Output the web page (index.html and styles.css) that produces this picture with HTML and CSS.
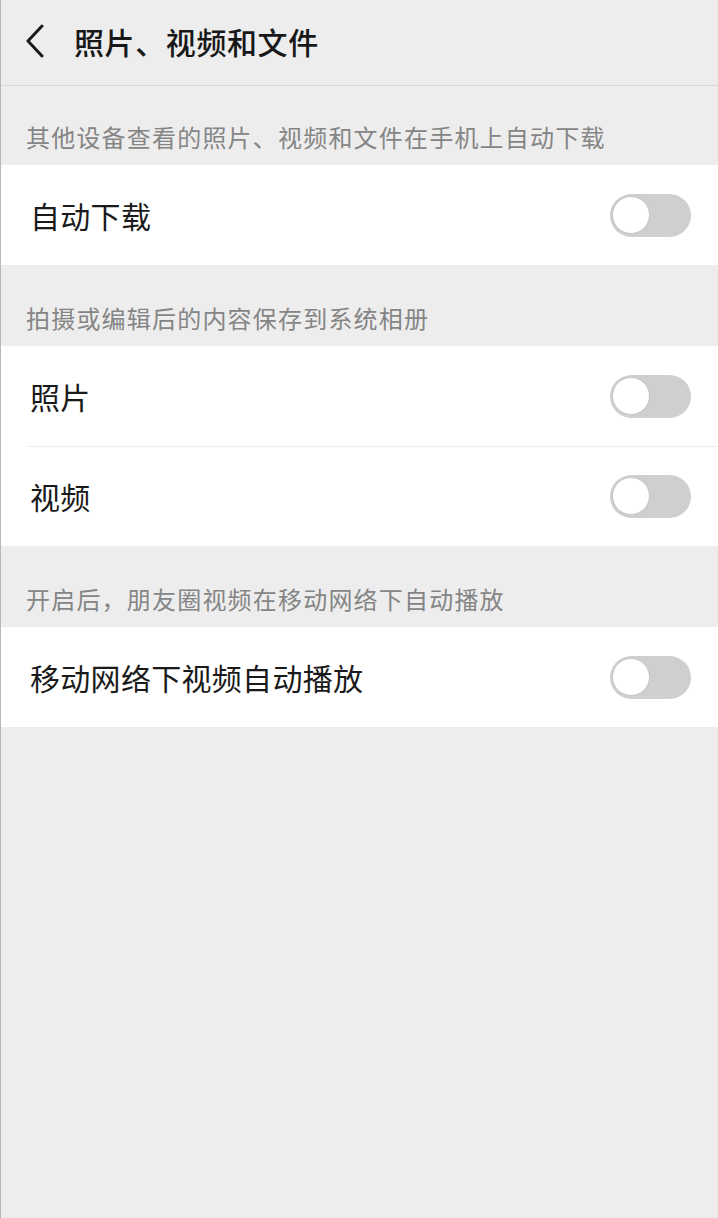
FILE: index.html
```html
<!DOCTYPE html>
<html lang="zh">
<head>
<meta charset="utf-8">
<link rel="stylesheet" href="styles.css">
</head>
<body>
<div class="page">
  <header class="topbar">
    <svg class="back" width="24" height="34" viewBox="0 0 24 34"><path d="M19 2 L5 17 L19 32" fill="none" stroke="#1a1a1a" stroke-width="3" stroke-linecap="round" stroke-linejoin="round"/></svg>
    <h1 class="title">照片、视频和文件</h1>
  </header>

  <div class="label first">其他设备查看的照片、视频和文件在手机上自动下载</div>
  <div class="group">
    <div class="row"><span class="row-text">自动下载</span><span class="switch"><span class="knob"></span></span></div>
  </div>

  <div class="label">拍摄或编辑后的内容保存到系统相册</div>
  <div class="group">
    <div class="row"><span class="row-text">照片</span><span class="switch"><span class="knob"></span></span></div>
    <div class="row divided"><span class="row-text">视频</span><span class="switch"><span class="knob"></span></span></div>
  </div>

  <div class="label">开启后，朋友圈视频在移动网络下自动播放</div>
  <div class="group">
    <div class="row"><span class="row-text">移动网络下视频自动播放</span><span class="switch"><span class="knob"></span></span></div>
  </div>
</div>
</body>
</html>
```

FILE: styles.css
```css
html, body {
  margin: 0;
  padding: 0;
  background: #ededed;
}
body {
  font-family: "Noto Sans CJK SC", "Noto Sans", sans-serif;
}
.page {
  min-height: 1218px;
  border-left: 1px solid #b8b8b8;
  background: #ededed;
  box-sizing: border-box;
}
.topbar {
  height: 86px;
  display: flex;
  align-items: center;
  border-bottom: 1px solid #d8d8d8;
  box-sizing: border-box;
  padding: 0 0 4px 22px;
}
.back {
  display: block;
  margin-right: 27px;
  margin-top: 1px;
}
.title {
  margin: 0;
  font-size: 30px;
  font-weight: 500;
  color: #181818;
  letter-spacing: 0.6px;
  line-height: 1;
}
.label {
  height: 81px;
  box-sizing: border-box;
  padding: 37px 0 0 25px;
  font-size: 24px;
  line-height: 32px;
  color: #858585;
  letter-spacing: 1.2px;
}
.label.first {
  height: 79px;
  padding-top: 35px;
}
.group {
  background: #fff;
}
.row {
  height: 100px;
  display: flex;
  align-items: center;
  justify-content: space-between;
  padding: 0 27px 0 29px;
  position: relative;
}
.row.divided::before {
  content: "";
  position: absolute;
  left: 27px;
  right: 0;
  top: 0;
  border-top: 1px solid #ececec;
}
.row-text {
  font-size: 30px;
  color: #1a1a1a;
  letter-spacing: 0.3px;
}
.switch {
  width: 81px;
  height: 43px;
  border-radius: 22px;
  background: #cfcfcf;
  display: flex;
  align-items: center;
  padding-left: 2px;
  box-sizing: border-box;
}
.knob {
  width: 38px;
  height: 38px;
  border-radius: 50%;
  background: #fff;
  border: 1px solid #c6c6c6;
  box-sizing: border-box;
}
```
